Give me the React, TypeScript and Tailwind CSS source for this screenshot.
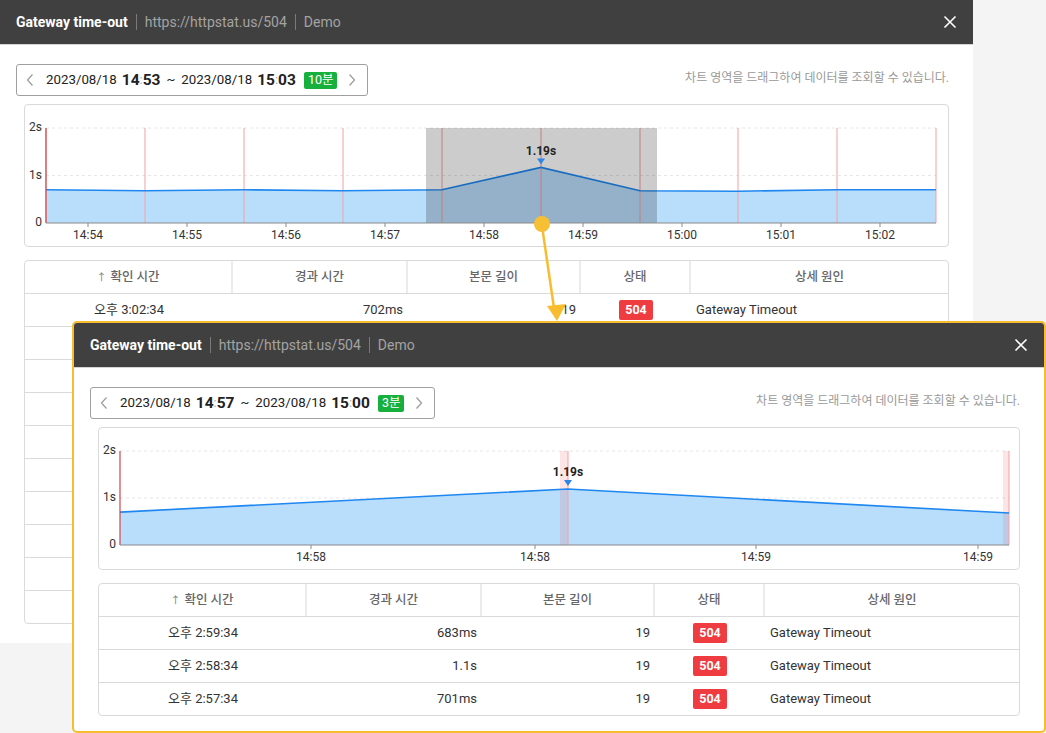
import React from "react";

type Pt = { x: number; v: number };
type Tick = { x: number; label: string };
type Red = { x: number; band?: number };

interface ChartProps {
  pts: Pt[];
  ticks: Tick[];
  reds: Red[];
  sel?: { x1: number; x2: number };
  peak: Pt;
  zero: number;
  unit: number;
}

const FILL = "#b9defc";
const LINE = "#1f87ef";

function Chart({ pts, ticks, reds, sel, peak, zero, unit }: ChartProps) {
  const y = (v: number) => zero - v * unit;
  const top = zero - 2 * unit;
  const left = pts[0].x;
  const right = pts[pts.length - 1].x;
  const line = pts.map((p) => `${p.x},${y(p.v)}`).join(" ");
  const area = `${left},${zero} ${line} ${right},${zero}`;

  return (
    <svg width="924" height="141" className="block">
      {/* grid */}
      <line x1={left} x2={right} y1={top} y2={top} stroke="#e6e6e6" strokeDasharray="3 3" />
      <line x1={left} x2={right} y1={zero - unit} y2={zero - unit} stroke="#e6e6e6" strokeDasharray="3 3" />

      <polygon points={area} fill={FILL} />

      {reds.map((r) =>
        r.band ? (
          <rect
            key={`b${r.x}`}
            x={r.x - r.band}
            y={top}
            width={r.band}
            height={zero - top}
            fill="rgba(240,80,80,0.15)"
          />
        ) : null
      )}
      {reds.map((r) => (
        <line key={r.x} x1={r.x} x2={r.x} y1={top} y2={zero} stroke="#f3a0a2" strokeWidth="1" />
      ))}

      <polyline points={line} fill="none" stroke={LINE} strokeWidth="1.6" />

      {sel && (
        <rect x={sel.x1} y={top} width={sel.x2 - sel.x1} height={zero - top} fill="rgba(0,0,0,0.2)" />
      )}

      {/* axes */}
      <line x1={left} x2={left} y1={top} y2={zero} stroke="#c9484b" strokeWidth="1.2" />
      <line x1={left} x2={right} y1={zero} y2={zero} stroke="#8a8a8a" strokeWidth="1" />
      {ticks.map((t) => (
        <line key={`t${t.x}`} x1={t.x} x2={t.x} y1={zero} y2={zero + 4} stroke="#8a8a8a" />
      ))}

      <g fontFamily="Roboto, sans-serif" fontSize="12" fill="#333">
        <text x={left - 4} y={top} textAnchor="end" dominantBaseline="middle">2s</text>
        <text x={left - 4} y={zero - unit} textAnchor="end" dominantBaseline="middle">1s</text>
        <text x={left - 4} y={zero} textAnchor="end" dominantBaseline="middle">0</text>
        {ticks.map((t) => (
          <text key={`l${t.x}`} x={t.x} y={zero + 13} textAnchor="middle" dominantBaseline="middle">
            {t.label}
          </text>
        ))}
        <text
          x={peak.x}
          y={y(peak.v) - 16}
          textAnchor="middle"
          dominantBaseline="middle"
          fontWeight="700"
          fill="#222"
        >
          1.19s
        </text>
      </g>
      <polygon
        points={`${peak.x - 4},${y(peak.v) - 9} ${peak.x + 4},${y(peak.v) - 9} ${peak.x},${y(peak.v) - 3}`}
        fill="#2b86e6"
      />
    </svg>
  );
}

function Header() {
  return (
    <div className="h-[44px] box-content bg-[#404040] border-b border-[#d4d4d4] flex items-center pl-4 pr-4">
      <span className="text-white font-bold text-[14px]">Gateway time-out</span>
      <span className="mx-2 h-4 w-px bg-[#7a7a7a]" />
      <span className="text-[#a3a3a3] text-[14px]">https://httpstat.us/504</span>
      <span className="mx-2 h-4 w-px bg-[#7a7a7a]" />
      <span className="text-[#a3a3a3] text-[14px]">Demo</span>
      <svg className="ml-auto" width="14" height="14" viewBox="0 0 14 14">
        <path d="M1.5 1.5 L12.5 12.5 M12.5 1.5 L1.5 12.5" stroke="#fff" strokeWidth="1.6" />
      </svg>
    </div>
  );
}

function Chevron({ dir }: { dir: "l" | "r" }) {
  return (
    <svg width="8" height="14" viewBox="0 0 8 14">
      <path
        d={dir === "l" ? "M6.5 1.5 L1.5 7 L6.5 12.5" : "M1.5 1.5 L6.5 7 L1.5 12.5"}
        fill="none"
        stroke="#9a9a9a"
        strokeWidth="1.2"
      />
    </svg>
  );
}

function Time({ h, m }: { h: string; m: string }) {
  return (
    <span className="text-[15.5px] font-bold text-[#222] leading-none">
      {h}
      <span className="font-normal text-[#aaa] text-[13px] relative -top-px">:</span>
      {m}
    </span>
  );
}

function DateBar({ from, to, badge }: { from: [string, string]; to: [string, string]; badge: string }) {
  return (
    <div className="h-8 inline-flex items-center border border-[#a0a0a0] rounded-[3px] pl-[9px] pr-[11px] text-[#222]">
      <Chevron dir="l" />
      <span className="ml-[12px] text-[13.3px]">2023/08/18</span>
      <span className="ml-[5px]">
        <Time h={from[0]} m={from[1]} />
      </span>
      <span className="ml-[6px] text-[13px]">~</span>
      <span className="ml-[6px] text-[13.3px]">2023/08/18</span>
      <span className="ml-[5px]">
        <Time h={to[0]} m={to[1]} />
      </span>
      <span className="ml-[8px] h-[17px] px-[4px] rounded-[2px] bg-[#17b03d] text-white text-[12.5px] flex items-center">
        {badge}
      </span>
      <span className="ml-[11px]">
        <Chevron dir="r" />
      </span>
    </div>
  );
}

type Row = { time: string; elapsed: string };

function Table({ rows }: { rows: Row[] }) {
  const heads = ["확인 시간", "경과 시간", "본문 길이", "상태", "상세 원인"];
  return (
    <div className="border border-[#dadada] rounded-[4px] overflow-hidden text-[13px] text-[#333]">
      <div className="grid grid-cols-[208px_175px_173px_110px_1fr] border-b border-[#dadada]">
        {heads.map((h, i) => (
          <div
            key={h}
            className={`h-[32px] flex items-center justify-center text-[12.5px] font-medium text-[#666] ${
              i < 4 ? "border-r-2 border-[#ebebeb]" : ""
            }`}
          >
            {i === 0 && <span className="text-[10px] text-[#888] mr-1">↑</span>}
            {h}
          </div>
        ))}
      </div>
      {rows.map((r, i) => (
        <div
          key={r.time}
          className={`grid grid-cols-[208px_175px_173px_110px_1fr] ${
            i < rows.length - 1 ? "border-b border-[#dadada]" : ""
          }`}
        >
          <div className="h-[32px] flex items-center justify-center">오후 {r.time}</div>
          <div className="h-[32px] flex items-center justify-end pr-[5px]">{r.elapsed}</div>
          <div className="h-[32px] flex items-center justify-end pr-[5px]">19</div>
          <div className="h-[32px] flex items-center justify-center">
            <span className="h-5 px-[6px] rounded-[2px] bg-[#ee3c41] text-white font-bold text-[12.5px] flex items-center">
              504
            </span>
          </div>
          <div className="h-[32px] flex items-center pl-[5px]">Gateway Timeout</div>
        </div>
      ))}
    </div>
  );
}

function Panel({
  from,
  to,
  badge,
  chart,
  rows,
}: {
  from: [string, string];
  to: [string, string];
  badge: string;
  chart: ChartProps;
  rows: Row[];
}) {
  return (
    <div>
      <Header />
      <div className="pt-[19px] px-4">
        <div className="flex items-center justify-between">
          <DateBar from={from} to={to} badge={badge} />
          <span className="text-[12px] text-[#999] pr-2 -mt-1">
            차트 영역을 드래그하여 데이터를 조회할 수 있습니다.
          </span>
        </div>
        <div className="mx-2 mt-2 h-[143px] border border-[#dadada] rounded-[4px]">
          <Chart {...chart} />
        </div>
        <div className="mx-2 mt-[13px]">
          <Table rows={rows} />
        </div>
      </div>
    </div>
  );
}

const bgChart: ChartProps = {
  zero: 118,
  unit: 47.5,
  pts: [
    { x: 21, v: 0.7 },
    { x: 120, v: 0.68 },
    { x: 219, v: 0.7 },
    { x: 318, v: 0.68 },
    { x: 417, v: 0.7 },
    { x: 516, v: 1.17 },
    { x: 615, v: 0.68 },
    { x: 713, v: 0.67 },
    { x: 812, v: 0.7 },
    { x: 911, v: 0.7 },
  ],
  ticks: ["14:54", "14:55", "14:56", "14:57", "14:58", "14:59", "15:00", "15:01", "15:02"].map((l, i) => ({
    x: 63 + i * 99,
    label: l,
  })),
  reds: [21, 120, 219, 318, 417, 516, 615, 713, 812, 911].map((x) => ({ x })),
  sel: { x1: 401, x2: 632 },
  peak: { x: 516, v: 1.17 },
};

const fgChart: ChartProps = {
  zero: 117,
  unit: 47,
  pts: [
    { x: 21, v: 0.7 },
    { x: 469, v: 1.19 },
    { x: 910, v: 0.68 },
  ],
  ticks: [
    { x: 212, label: "14:58" },
    { x: 436, label: "14:58" },
    { x: 657, label: "14:59" },
    { x: 879, label: "14:59" },
  ],
  reds: [
    { x: 469, band: 8 },
    { x: 910, band: 6 },
  ],
  peak: { x: 469, v: 1.19 },
};

const bgRows: Row[] = [
  { time: "3:02:34", elapsed: "702ms" },
  { time: "3:01:34", elapsed: "690ms" },
  { time: "3:00:34", elapsed: "688ms" },
  { time: "2:59:34", elapsed: "683ms" },
  { time: "2:58:34", elapsed: "1.1s" },
  { time: "2:57:34", elapsed: "701ms" },
  { time: "2:56:34", elapsed: "689ms" },
  { time: "2:55:34", elapsed: "701ms" },
  { time: "2:54:34", elapsed: "693ms" },
  { time: "2:53:34", elapsed: "700ms" },
];

const fgRows: Row[] = [
  { time: "2:59:34", elapsed: "683ms" },
  { time: "2:58:34", elapsed: "1.1s" },
  { time: "2:57:34", elapsed: "701ms" },
];

export default function App() {
  return (
    <div className="relative w-[1046px] h-[733px] overflow-hidden bg-[#f4f4f4] font-['Roboto','Noto_Sans_CJK_KR',sans-serif]">
      {/* back window */}
      <div className="w-[973px] h-[643px] bg-white">
        <Panel from={["14", "53"]} to={["15", "03"]} badge="10분" chart={bgChart} rows={bgRows} />
      </div>

      {/* connector */}
      <svg className="absolute left-0 top-0 pointer-events-none" width="1046" height="733">
        <line x1="542" y1="226" x2="554" y2="308" stroke="#f7bd2f" strokeWidth="2.5" />
        <polygon points="547,306 566,304 557,321" fill="#f7bd2f" />
        <circle cx="542" cy="224" r="8" fill="#f7bf34" />
      </svg>

      {/* zoomed window */}
      <div className="absolute left-[72px] top-[321px] w-[974px] h-[412px] border-2 border-[#f7bd2f] rounded-[5px] bg-white overflow-hidden">
        <Panel from={["14", "57"]} to={["15", "00"]} badge="3분" chart={fgChart} rows={fgRows} />
      </div>
    </div>
  );
}
